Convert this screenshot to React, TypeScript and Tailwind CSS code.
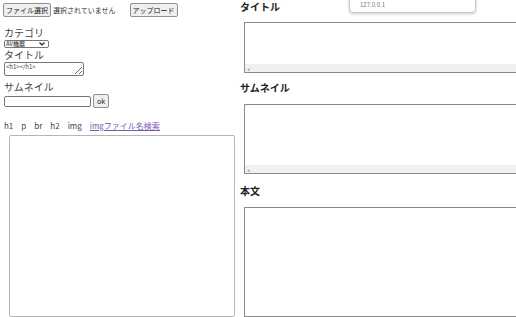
import React from "react";

const font = { fontFamily: '"Noto Sans CJK JP", "Noto Sans", sans-serif' };

function Btn({ children, className = "" }: { children: React.ReactNode; className?: string }) {
  return (
    <button
      className={`h-[14px] px-[2px] border border-[#8f8f8f] bg-[#efefef] rounded-[2px] text-[7px] leading-[12px] text-[#222] ${className}`}
    >
      {children}
    </button>
  );
}

function ScrollArea({ h }: { h: string }) {
  return (
    <div className={`${h} ml-[4px] border border-[#8a8a8a] border-r-0 bg-white flex flex-col`}>
      <div className="flex-1" />
      <div className="h-[8px] bg-[#f0f0f0] flex items-center pl-[2px]">
        <span className="text-[5px] text-[#999] leading-none">◂</span>
      </div>
    </div>
  );
}

export default function App() {
  return (
    <div className="relative w-[516px] h-[317px] overflow-hidden bg-white text-[#444] flex" style={font}>
      {/* left column */}
      <div className="w-[240px] shrink-0 flex flex-col pl-[3px] pt-[3px]">
        <div className="flex items-center">
          <Btn>ファイル選択</Btn>
          <span className="ml-[2px] text-[7px] text-[#333]">選択されていません</span>
          <Btn className="ml-[14px]">アップロード</Btn>
        </div>
        <div className="mt-[10px] text-[10px] leading-[12px] pl-[1px]">カテゴリ</div>
        <div className="mt-[1px] ml-[1px] w-[45px] h-[9px] border border-[#767676] rounded-[2px] bg-white flex items-center justify-between px-[1px]">
          <span className="text-[6px] leading-none text-[#222]">AV機器</span>
          <svg width="6" height="4" viewBox="0 0 6 4" className="mr-[2px]">
            <path d="M0.5 0.5 L3 3 L5.5 0.5" fill="none" stroke="#222" strokeWidth="1.2" />
          </svg>
        </div>
        <div className="mt-[1px] text-[10px] leading-[12px] pl-[1px]">タイトル</div>
        <textarea
          className="mt-[1px] w-[80px] h-[15px] border border-[#767676] rounded-[2px] text-[6px] leading-[7px] px-[1px] resize-y ml-[1px]"
          defaultValue="<h1></h1>"
        />
        <div className="mt-[5px] text-[10px] leading-[12px] pl-[1px]">サムネイル</div>
        <div className="mt-[1px] flex items-center ml-[1px]">
          <input className="w-[87px] h-[11px] border border-[#767676] rounded-[2px]" />
          <Btn className="ml-[2px] h-[12px] leading-[10px] text-[6px] px-[3px]">ok</Btn>
        </div>
        <div className="mt-[12px] flex items-center gap-[8px] text-[8px] leading-[12px] pl-[1px]">
          <span>h1</span>
          <span>p</span>
          <span>br</span>
          <span>h2</span>
          <span>img</span>
          <span className="text-[#7b5cb0] underline">imgファイル名検索</span>
        </div>
        <textarea className="mt-[3px] ml-[6px] w-[226px] h-[200px] border border-[#b5b5b5] rounded-[2px] resize-none" />
      </div>

      {/* right column */}
      <div className="flex-1 flex flex-col pt-[1px]">
        <div className="text-[10px] font-bold leading-[12px] text-[#222]">タイトル</div>
        <div className="mt-[9px]">
          <ScrollArea h="h-[51px]" />
        </div>
        <div className="mt-[9px] text-[10px] font-bold leading-[12px] text-[#222]">サムネイル</div>
        <div className="mt-[10px]">
          <ScrollArea h="h-[70px]" />
        </div>
        <div className="mt-[11px] text-[10px] font-bold leading-[12px] text-[#222]">本文</div>
        <div className="mt-[10px] ml-[4px] h-[130px] border border-[#8a8a8a] border-r-0 bg-white" />
      </div>

      {/* browser tooltip overlay */}
      <div className="absolute left-[349px] top-[-4px] w-[127px] h-[17px] bg-white border border-[#c8c8c8] rounded-[4px] shadow-[0_1px_3px_rgba(0,0,0,0.2)] pl-[10px] pt-[5px]">
        <span className="text-[6px] leading-none text-[#777] block">127.0.0.1</span>
      </div>
    </div>
  );
}
